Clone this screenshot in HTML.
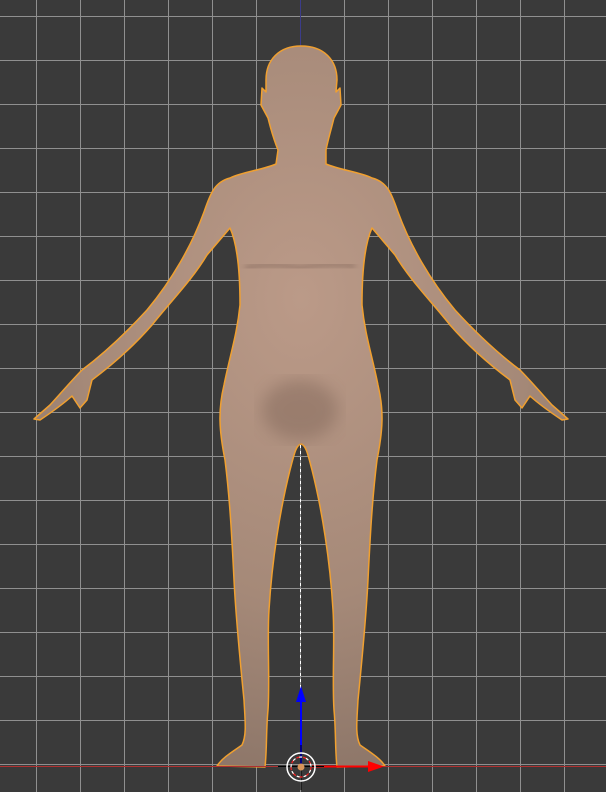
<!DOCTYPE html>
<html><head><style>html,body{margin:0;padding:0;background:#3a3a3a;}svg{display:block}</style></head>
<body>
<svg width="606" height="792" viewBox="0 0 606 792" xmlns="http://www.w3.org/2000/svg">
<defs>
<pattern id="g" x="36" y="16" width="44" height="44" patternUnits="userSpaceOnUse">
<path d="M0.5 0V44M0 0.5H44" stroke="#8f8f8f" stroke-width="1" fill="none"/>
</pattern>
<radialGradient id="skin" cx="0.5" cy="0.35" r="0.7">
<stop offset="0" stop-color="#bb9a88"/>
<stop offset="0.6" stop-color="#a58978"/>
<stop offset="1" stop-color="#8a7467"/>
</radialGradient>
<filter id="b"><feGaussianBlur stdDeviation="8"/></filter>
<filter id="b2"><feGaussianBlur stdDeviation="3"/></filter>
</defs>
<rect width="606" height="792" fill="#3a3a3a"/>
<rect width="606" height="792" fill="url(#g)"/>
<line x1="300.5" y1="0" x2="300.5" y2="50" stroke="#3b3c8a" stroke-width="1"/>
<path fill="url(#skin)" stroke="#f0a030" stroke-width="1.5" stroke-linejoin="round" d="
M301 46 C324 46 337 60 337 80 L336 92 L340 88 L341 105 L334 118 C331 130 328 140 326 150 L326 164
C340 170 360 172 372 178 C388 182 392 195 398 212 C410 245 430 280 455 310 C478 335 500 355 520 370
C530 380 540 392 552 405 L568 419 L562 420 C550 412 540 405 530 396 L522 408 L515 400 L510 380
C490 365 470 348 450 325 C430 300 410 280 395 255 L372 228 C362 250 362 290 362 305
C365 335 372 355 378 385 C384 410 383 430 377 460 C372 500 370 540 368 580 C366 620 362 660 358 700
C357 720 355 735 360 745 C370 752 380 758 385 766 L337 767 C335 750 336 730 334 710
C332 680 335 640 333 610 C330 560 322 510 312 470 C308 455 306 445 301 444
C296 445 294 455 290 470 C280 510 272 560 269 610 C267 640 270 680 268 710 C266 730 267 750 265 767
L217 766 C222 758 232 752 242 745 C247 735 245 720 244 700 C240 660 236 620 234 580
C232 540 230 500 225 460 C219 430 218 410 224 385 C230 355 237 335 240 305
C240 290 240 250 230 228 L207 255 C192 280 172 300 152 325 C132 348 112 365 92 380
L87 400 L80 408 L72 396 C62 405 52 412 40 420 L34 419 L50 405 C62 392 72 380 82 370
C102 355 124 335 147 310 C172 280 192 245 204 212 C210 195 214 182 230 178
C242 172 262 170 276 164 L278 150 C274 140 271 130 268 118 L261 105 L262 88 L266 92 L266 80
C266 60 279 46 301 46 Z"/>
<path d="M245 268 Q270 262 300 268 Q330 262 355 266" stroke="#7a6055" stroke-width="5" fill="none" opacity="0.5" filter="url(#b2)"/>
<ellipse cx="300" cy="410" rx="38" ry="30" fill="#6d5548" opacity="0.35" filter="url(#b)"/>
<line x1="300.5" y1="445" x2="300.5" y2="690" stroke="#ffffff" stroke-width="1" stroke-dasharray="3,3"/>
<line x1="0" y1="766.5" x2="606" y2="766.5" stroke="#b03030" stroke-width="1"/>
<line x1="301" y1="700" x2="301" y2="766" stroke="#0000ff" stroke-width="2"/>
<polygon points="301,686 296,702 306,702" fill="#0000ff"/>
<line x1="312" y1="766.5" x2="372" y2="766.5" stroke="#ff0000" stroke-width="2"/>
<polygon points="384,766.5 368,761 368,772" fill="#ff0000"/>
<line x1="278" y1="766.5" x2="324" y2="766.5" stroke="#000" stroke-width="1"/>
<line x1="301" y1="745" x2="301" y2="790" stroke="#000" stroke-width="1"/>
<circle cx="301" cy="767" r="14" fill="none" stroke="#fff" stroke-width="1.5"/>
<circle cx="301" cy="767" r="10" fill="none" stroke="#ff2020" stroke-width="1.2" stroke-dasharray="4,3"/>
<circle cx="301" cy="767" r="10" fill="none" stroke="#fff" stroke-width="1.2" stroke-dasharray="3,4" stroke-dashoffset="4"/>
<circle cx="301" cy="767" r="3.5" fill="#d8945a"/>
</svg>
</body></html>
